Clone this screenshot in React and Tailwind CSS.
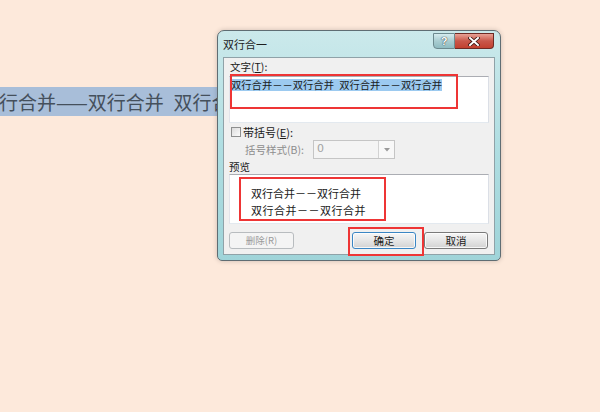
import React from 'react'

const cjk = { fontFamily: '"Noto Sans CJK SC", "Liberation Sans", sans-serif' }

const WinButton = ({ children, disabled, focused, className = '' }) => {
    if (disabled) {
        return (
            <div className={`h-[17px] rounded-[3px] border border-[#b8bcbf] bg-[#f4f4f4] flex items-center justify-center text-[9.5px] text-[#9a9a9a] ${className}`}>
                {children}
            </div>
        )
    }
    return (
        <div
            className={`h-[17px] rounded-[3px] border flex items-center justify-center text-[10.5px] text-[#1a1a1a] bg-gradient-to-b from-[#f6f6f6] via-[#e6e6e6] to-[#d3d3d3] shadow-[inset_0_0_0_1px_rgba(255,255,255,0.8)] ${focused ? 'border-[#3a86c4]' : 'border-[#7a7a7a]'} ${className}`}
        >
            {children}
        </div>
    )
}

const Dialog = () => (
    <div className="absolute left-[217px] top-[30px] w-[284px] h-[231px] rounded-t-[7px] rounded-b-[5px] border border-[#5f6d73] bg-gradient-to-b from-[#cbe9eb] via-[#b0dee2] to-[#9fd4d9] shadow-[0_0_5px_rgba(0,0,0,0.2)] flex flex-col px-[5px] pb-[5px]" style={cjk}>
        {/* title bar */}
        <div className="h-[26px] flex items-center text-[11px] text-[#1e1e1e]">双行合一</div>

        {/* caption buttons */}
        <div className="absolute top-[2px] right-[6px] flex">
            <div className="w-[22px] h-[16px] rounded-bl-[4px] border border-[#6d8a8f] bg-gradient-to-b from-[#d6ecee] via-[#a9cdd1] to-[#8fbcc1] flex items-center justify-center text-[11px] font-bold text-white [text-shadow:0_0_1px_#2b3b40,0_0_1px_#2b3b40]" style={{ fontFamily: '"Liberation Sans", sans-serif' }}>
                ?
            </div>
            <div className="w-[39px] h-[16px] rounded-br-[4px] border border-l-0 border-[#6e2a24] bg-gradient-to-b from-[#e8a195] via-[#c9574a] to-[#c2402f] flex items-center justify-center">
                <svg width="12" height="9" viewBox="0 0 12 9">
                    <path d="M2 1 L10 8 M10 1 L2 8" stroke="#3a1410" strokeWidth="3.6" strokeLinecap="square" />
                    <path d="M2 1 L10 8 M10 1 L2 8" stroke="#ffffff" strokeWidth="2" strokeLinecap="square" />
                </svg>
            </div>
        </div>

        {/* client area */}
        <div className="flex-1 border border-[#8fa2a8] bg-[#f0f0f0] flex flex-col px-[5px] pt-[1px] text-[10.5px] text-[#1a1a1a]">
            <div className="h-[16px] leading-[16px] pl-[1px]">
                文字(<span className="underline">T</span>):
            </div>
            <div className="mt-[1px] h-[47px] border border-[#abadb3] border-l-[#e2e3ea] border-r-[#dbdfe6] border-b-[#e3e9ef] bg-white pl-[1px]">
                <span className="inline-block bg-[#9ccaf0] text-[10.3px] leading-[12px] text-[#1a1a1a] whitespace-nowrap">
                    双行合并－－双行合并{'\u2002'}双行合并－－双行合并
                </span>
            </div>

            <div className="mt-[2px] h-[14px] flex items-center pl-[2px] gap-[2px]">
                <div className="w-[10px] h-[10px] border border-[#8e8f8f] bg-gradient-to-br from-[#dcdcdc] to-[#fbfbfb]" />
                <span className="text-[11px]">带括号(<span className="underline">E</span>):</span>
            </div>

            <div className="mt-[1px] h-[19px] flex items-center">
                <span className="w-[84px] pl-[16px] text-[#8d8d8d]">括号样式(B):</span>
                <div className="w-[82px] h-[19px] flex border border-[#c5c5c5] bg-[#f4f4f4]">
                    <div className="flex-1 flex items-center pl-[3px] text-[#a3a3a3] text-[11px]" style={{ fontFamily: '"DejaVu Sans", sans-serif' }}>0</div>
                    <div className="w-[16px] border-l border-[#d2d2d2] bg-[#f8f8f8] flex items-center justify-center">
                        <svg width="6" height="4" viewBox="0 0 6 4"><path d="M0 0 L6 0 L3 3.5 Z" fill="#9a9a9a" /></svg>
                    </div>
                </div>
            </div>

            <div className="mt-[1px] h-[14px] leading-[14px]">预览</div>
            <div className="h-[50px] border border-[#abadb3] border-l-[#e2e3ea] border-r-[#dbdfe6] border-b-[#e3e9ef] bg-white pl-[21px] pt-[10px] text-[11px] leading-[17px] text-[#1a1a1a]">
                <div>双行合并－－双行合并</div>
                <div className="tracking-[0.5px]">双行合并－－双行合并</div>
            </div>

            <div className="mt-[8px] flex pr-[1px]">
                <WinButton disabled className="w-[65px]">删除(R)</WinButton>
                <WinButton focused className="w-[64px] ml-auto">确定</WinButton>
                <WinButton className="w-[64px] ml-[8px]">取消</WinButton>
            </div>
        </div>
    </div>
)

export default function App() {
    return (
        <div className="relative w-[600px] h-[412px] overflow-hidden bg-[#fde9db]" style={cjk}>
            {/* document text, clipped where the dialog sits over it */}
            <div className="pt-[87px] w-[218px] overflow-hidden whitespace-nowrap">
                <span className="inline-block ml-[-1px] h-[29px] leading-[29px] bg-[#a8bed9] text-[19px] text-[#45505c]">
                    行合并——双行合并{'\u2002'}双行合并——双行合并
                </span>
            </div>

            <Dialog />

            {/* red annotation boxes */}
            <div className="absolute left-[230px] top-[74px] w-[228px] h-[35px] border-2 border-[#ee3535]" />
            <div className="absolute left-[239px] top-[177px] w-[147px] h-[44px] border-2 border-[#ee3535]" />
            <div className="absolute left-[348px] top-[227px] w-[76px] h-[29px] border-2 border-[#ee3535]" />
        </div>
    )
}
